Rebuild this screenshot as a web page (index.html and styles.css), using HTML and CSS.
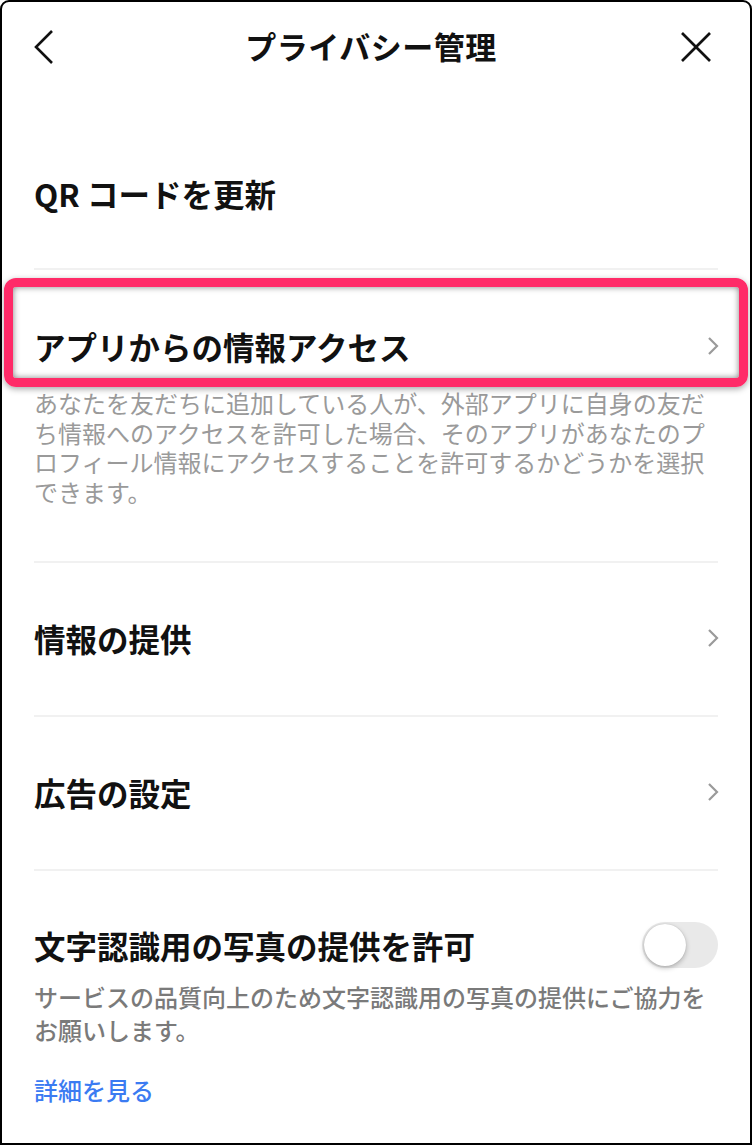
FILE: index.html
```html
<!DOCTYPE html>
<html lang="ja">
<head>
    <meta charset="UTF-8">
    <title>プライバシー管理</title>
    <link rel="stylesheet" href="styles.css">
</head>
<body>
<div class="screen">
    <div class="top-bar">
        <svg class="nav-icon" width="34" height="40" viewBox="0 0 34 40">
            <polyline points="22,4 6,20 22,36" fill="none" stroke="#111" stroke-width="2.6"/>
        </svg>
        <h1 class="title">プライバシー管理</h1>
        <svg class="nav-icon" width="34" height="40" viewBox="0 0 34 40">
            <line x1="4" y1="6" x2="32" y2="34" stroke="#111" stroke-width="2.6"/>
            <line x1="32" y1="6" x2="4" y2="34" stroke="#111" stroke-width="2.6"/>
        </svg>
    </div>

    <div class="list">
        <div class="section first">
            <div class="row">
                <span class="label">QR コードを更新</span>
            </div>
        </div>

        <div class="section apps">
            <div class="row">
                <span class="label">アプリからの情報アクセス</span>
                <svg class="chevron" width="14" height="22" viewBox="0 0 14 22">
                    <polyline points="3,3 11,11 3,19" fill="none" stroke="#9a9a9a" stroke-width="2.2"/>
                </svg>
            </div>
            <p class="note">あなたを友だちに追加している人が、外部アプリに自身の友だち情報へのアクセスを許可した場合、そのアプリがあなたのプロフィール情報にアクセスすることを許可するかどうかを選択できます。</p>
        </div>

        <div class="section">
            <div class="row">
                <span class="label">情報の提供</span>
                <svg class="chevron" width="14" height="22" viewBox="0 0 14 22">
                    <polyline points="3,3 11,11 3,19" fill="none" stroke="#9a9a9a" stroke-width="2.2"/>
                </svg>
            </div>
        </div>

        <div class="section">
            <div class="row">
                <span class="label">広告の設定</span>
                <svg class="chevron" width="14" height="22" viewBox="0 0 14 22">
                    <polyline points="3,3 11,11 3,19" fill="none" stroke="#9a9a9a" stroke-width="2.2"/>
                </svg>
            </div>
        </div>

        <div class="section last">
            <div class="row">
                <span class="label">文字認識用の写真の提供を許可</span>
                <div class="toggle"><div class="knob"></div></div>
            </div>
            <p class="note dark">サービスの品質向上のため文字認識用の写真の提供にご協力をお願いします。</p>
            <a class="more" href="#">詳細を見る</a>
        </div>
    </div>

    <!-- 強調枠 -->
    <div class="highlight"></div>
</div>
</body>
</html>
```

FILE: styles.css
```css
* {
    box-sizing: border-box;
}

body {
    margin: 0;
    font-family: "Noto Sans CJK JP", "Noto Sans", sans-serif;
    background: #fff;
    color: #111;
}

.screen {
    position: relative;
    width: 752px;
    height: 1145px;
    border: 2px solid #000;
    border-radius: 9px 9px 0 0;
    overflow: hidden;
    background: #fff;
}

.top-bar {
    height: 90px;
    display: flex;
    align-items: center;
    justify-content: space-between;
    padding: 0 38px 4px 28px;
}

.title {
    margin: 0;
    font-size: 31px;
    font-weight: 700;
    letter-spacing: 0.5px;
}

.nav-icon {
    display: block;
    margin-top: 4px;
}

.list {
    padding: 0 32px;
}

.section {
    border-top: 2px solid #f1f1f1;
    padding: 53px 0 55px;
}

.section.first {
    border-top: none;
    padding: 79px 0 53px;
}

.section.apps {
    padding-top: 54px;
}

.section.last {
    padding: 52px 0 0;
}

.row {
    display: flex;
    align-items: center;
    justify-content: space-between;
    height: 44px;
}

.label {
    font-size: 31.5px;
    font-weight: 700;
    line-height: 44px;
}

.chevron {
    display: block;
    margin-right: -2px;
}

.note {
    margin: 20px 0 0;
    font-size: 24px;
    line-height: 29.5px;
    color: #9a9a9a;
    padding-right: 10px;
}

.note.dark {
    color: #7a7a7a;
    font-weight: 500;
    line-height: 33px;
    margin-top: 13px;
}

.toggle {
    width: 76px;
    height: 46px;
    border-radius: 23px;
    background: #e9e9e9;
    padding: 2px;
}

.knob {
    width: 42px;
    height: 42px;
    border-radius: 50%;
    background: #fff;
    box-shadow: 0 2px 5px rgba(0, 0, 0, 0.25), 0 0 1px rgba(0, 0, 0, 0.2);
}

.more {
    display: inline-block;
    margin-top: 26px;
    font-size: 24px;
    font-weight: 500;
    color: #3b7bf2;
    text-decoration: none;
}

.highlight {
    position: absolute;
    left: 2px;
    top: 276px;
    width: 744px;
    height: 109px;
    border: 9px solid #ff2b68;
    border-radius: 12px;
    box-shadow: 0 2px 6px rgba(0, 0, 0, 0.35), inset 0 0 6px rgba(0, 0, 0, 0.5);
}
```
